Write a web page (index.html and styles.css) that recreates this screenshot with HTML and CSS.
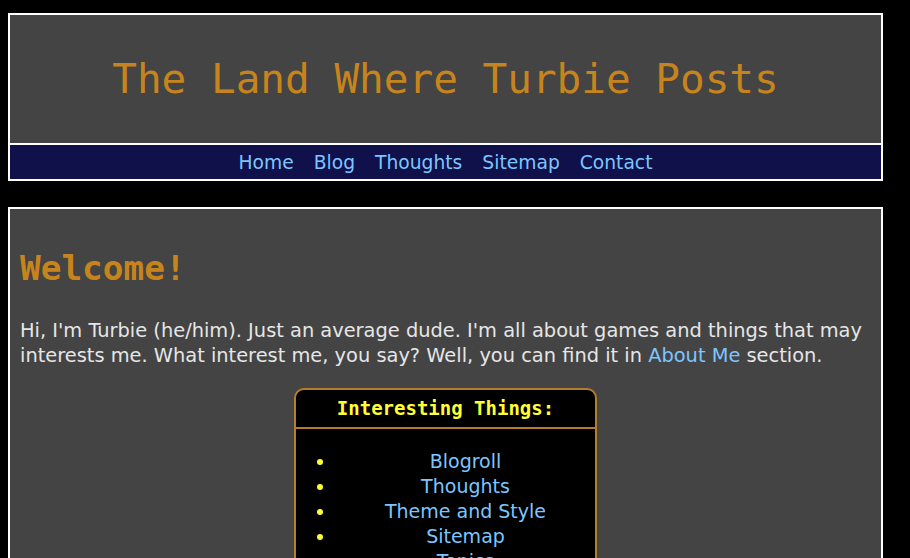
FILE: index.html
```html
<!DOCTYPE html>
<html lang="en">
<head>
<meta charset="utf-8">
<title>The Land Where Turbie Posts</title>
<link rel="stylesheet" href="styles.css">
</head>
<body>
<div class="page">
  <header class="site-header">
    <h1 class="site-title">The Land Where Turbie Posts</h1>
    <nav class="site-nav">
      <a href="#">Home</a>
      <a href="#">Blog</a>
      <a href="#">Thoughts</a>
      <a href="#">Sitemap</a>
      <a href="#">Contact</a>
    </nav>
  </header>

  <main class="content">
    <h2 class="welcome">Welcome!</h2>
    <p class="intro">Hi, I'm Turbie (he/him). Just an average dude. I'm all about games and things that may interests me. What interest me, you say? Well, you can find it in <a href="#">About Me</a> section.</p>

    <section class="things">
      <h3 class="things-title">Interesting Things:</h3>
      <ul class="things-list">
        <li><a href="#">Blogroll</a></li>
        <li><a href="#">Thoughts</a></li>
        <li><a href="#">Theme and Style</a></li>
        <li><a href="#">Sitemap</a></li>
        <li><a href="#">Topics</a></li>
      </ul>
    </section>
  </main>
</div>
</body>
</html>
```

FILE: styles.css
```css
html, body {
  background: #000;
}

body {
  margin: 8px;
  font-family: "DejaVu Sans", Verdana, sans-serif;
  color: #e6e6e6;
}

a {
  color: #7cc6ff;
  text-decoration: none;
}

.page {
  width: 875px;
}

/* header block */
.site-header {
  margin-top: 5px;
  border: 2px solid #fff;
  background: #444;
}

.site-title {
  margin: 0;
  height: 128px;
  display: flex;
  align-items: center;
  justify-content: center;
  font-family: "DejaVu Sans Mono", monospace;
  font-weight: normal;
  font-size: 41px;
  color: #c8841c;
}

.site-nav {
  box-sizing: border-box;
  height: 36px;
  padding-top: 1px;
  border-top: 2px solid #fff;
  background: #10104a;
  display: flex;
  align-items: center;
  justify-content: center;
  gap: 20px;
  font-size: 18.7px;
}

/* main content */
.content {
  margin-top: 26px;
  border: 2px solid #fff;
  background: #444;
  padding: 39px 10px 40px;
}

.welcome {
  margin: 0 0 30px;
  font-family: "DejaVu Sans Mono", monospace;
  font-weight: bold;
  font-size: 34.4px;
  color: #c8841c;
}

.intro {
  margin: 0;
  font-size: 19.4px;
  line-height: 25px;
}

.things {
  width: 299px;
  margin: 20px auto 0;
  border: 2px solid #b87d2b;
  border-radius: 10px;
  background: #000;
}

.things-title {
  margin: 0;
  padding: 7px 0 8px;
  border-bottom: 2px solid #b87d2b;
  text-align: center;
  font-family: "DejaVu Sans Mono", monospace;
  font-weight: bold;
  font-size: 19px;
  line-height: 22px;
  color: #ffff33;
}

.things-list {
  margin: 20px 0;
  padding: 0 0 0 40px;
  font-size: 19px;
  line-height: 25px;
  color: #ffff33;
}

.things-list li {
  text-align: center;
}
```
